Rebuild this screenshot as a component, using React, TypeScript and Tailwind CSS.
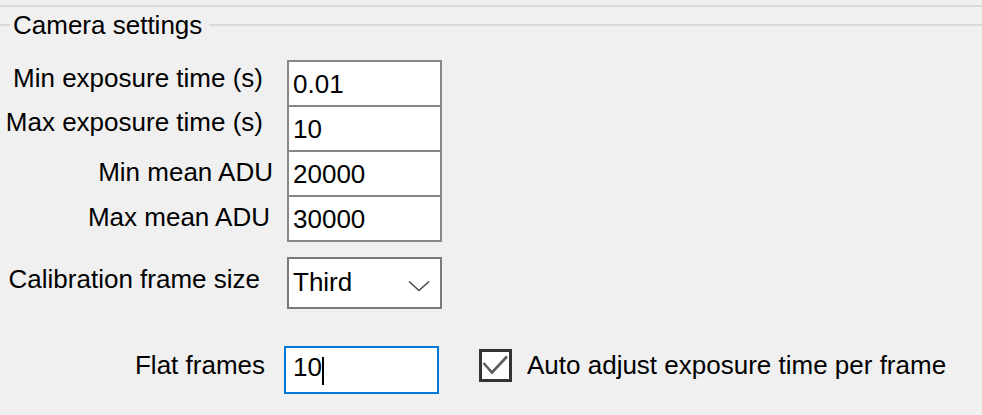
import React from 'react';

type FieldRow = {
  label: string;
  value: string;
  labelPad: string; // right padding so the label ends where it does in the form
  labelTop: string;
};

const rows: FieldRow[] = [
  { label: 'Min exposure time (s)', value: '0.01', labelPad: 'pr-[24px]', labelTop: 'pt-[3px]' },
  { label: 'Max exposure time (s)', value: '10', labelPad: 'pr-[24px]', labelTop: 'pt-[2px]' },
  { label: 'Min mean ADU', value: '20000', labelPad: 'pr-[14px]', labelTop: 'pt-[7px]' },
  { label: 'Max mean ADU', value: '30000', labelPad: 'pr-[17px]', labelTop: 'pt-[7px]' },
];

const Chevron: React.FC = () => (
  <svg width="22" height="12" viewBox="0 0 22 12" className="mt-[13px] mr-[10px]">
    <polyline points="1,1.5 11,10.5 21,1.5" fill="none" stroke="#4a4a4a" strokeWidth="1.6" />
  </svg>
);

const CheckBox: React.FC<{ checked?: boolean }> = ({ checked = true }) => (
  <div className="w-[33px] h-[33px] border-[3px] border-[#333333] bg-white shrink-0">
    {checked && (
      <svg width="27" height="27" viewBox="0 0 27 27">
        <polyline points="1.5,11 10,20.5 25,4.5" fill="none" stroke="#5c5c5c" strokeWidth="2.6" />
      </svg>
    )}
  </div>
);

export default function App() {
  return (
    <div className="w-[982px] h-[415px] overflow-hidden bg-[#f0f0f0] text-black text-[26px] leading-[30px] font-['Liberation_Sans',Arial,sans-serif]">
      {/* bottom edge of the group above */}
      <div className="pt-[5px]">
        <div className="h-[2px] bg-[#dadada]" />
      </div>

      {/* group box header */}
      <div className="mt-[3px] h-[30px] flex items-center">
        <div className="w-[10px] h-[2px] bg-[#dadada]" />
        <span className="ml-[3px] mr-[7px] whitespace-nowrap">Camera settings</span>
        <div className="flex-1 h-[2px] bg-[#dadada]" />
      </div>

      {/* numeric fields */}
      <div className="mt-[20px]">
        {rows.map((r, i) => (
          <div key={r.label} className={`flex ${i > 0 ? '-mt-[2px]' : ''}`}>
            <div className={`w-[287px] text-right whitespace-nowrap ${r.labelPad} ${r.labelTop}`}>{r.label}</div>
            <div className="w-[155px] h-[47px] border-2 border-[#878787] bg-white pl-[4px] pt-[7px]">{r.value}</div>
          </div>
        ))}
      </div>

      {/* calibration frame size */}
      <div className="mt-[15px] flex">
        <div className="w-[287px] text-right whitespace-nowrap pr-[27px] pt-[7px]">Calibration frame size</div>
        <div className="w-[155px] h-[52px] border-2 border-[#7a7a7a] bg-white flex items-start justify-between pl-[4px] pt-[8px]">
          <span>Third</span>
          <Chevron />
        </div>
      </div>

      {/* flat frames */}
      <div className="mt-[37px] flex items-start">
        <div className="w-[284px] text-right whitespace-nowrap pr-[19px] pt-[4px]">Flat frames</div>
        <div className="w-[155px] h-[48px] border-2 border-[#0078d7] bg-white flex items-start pl-[7px] pt-[4px]">
          <span>10</span>
          <span className="w-[2px] h-[28px] bg-black mt-[5px]" />
        </div>
        <div className="ml-[40px] mt-[3px]">
          <CheckBox />
        </div>
        <span className="ml-[15px] pt-[4px] whitespace-nowrap">Auto adjust exposure time per frame</span>
      </div>
    </div>
  );
}
